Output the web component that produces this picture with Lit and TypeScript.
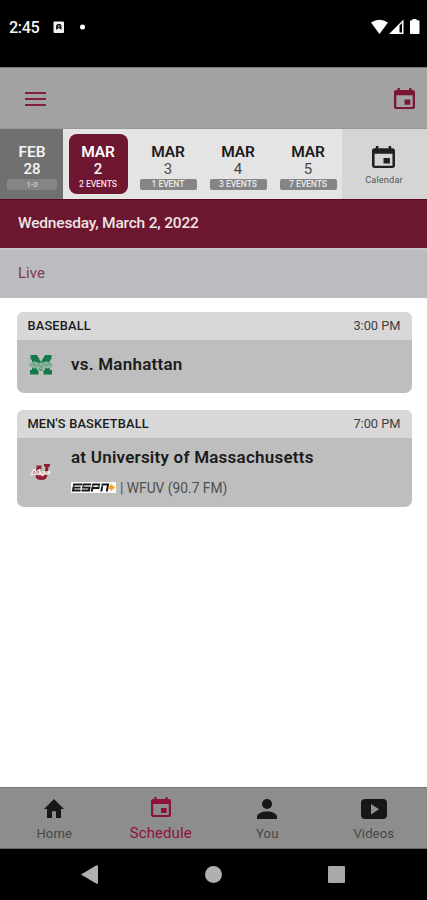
import { LitElement, html, css } from "lit";
import { customElement } from "lit/decorators.js";
import { classMap } from "lit/directives/class-map.js";

interface Day { month: string; day: string; note: string; kind: string }

const DAYS: Day[] = [
  { month: "FEB", day: "28", note: "1-0", kind: "past" },
  { month: "MAR", day: "2", note: "2 EVENTS", kind: "selected" },
  { month: "MAR", day: "3", note: "1 EVENT", kind: "" },
  { month: "MAR", day: "4", note: "3 EVENTS", kind: "" },
  { month: "MAR", day: "5", note: "7 EVENTS", kind: "" },
];

const calendarPath = "M17 12h-5v5h5v-5zM16 1v2H8V1H6v2H5c-1.11 0-1.99.9-1.99 2L3 19c0 1.1.89 2 2 2h14c1.1 0 2-.9 2-2V5c0-1.1-.9-2-2-2h-1V1h-2zm3 18H5V8h14v11z";

const calendar = (cls: string) => html`<svg class=${cls} viewBox="3 1 18 20" preserveAspectRatio="none"><path d=${calendarPath} fill="currentColor"/></svg>`;

const TABS = [
  { name: "Home", icon: html`<svg class="i-home" viewBox="2 3 20 17" preserveAspectRatio="none"><path fill="currentColor" d="M10 20v-6h4v6h5v-8h3L12 3 2 12h3v8z"/></svg>` },
  { name: "Schedule", icon: calendar("i-cal") },
  { name: "You", icon: html`<svg class="i-you" viewBox="0 0 20 20" preserveAspectRatio="none"><circle cx="10" cy="5" r="5" fill="currentColor"/><path fill="currentColor" d="M0 20v-2.200c0-3.300 5-5.300 10-5.300s10 2 10 5.300V20z"/></svg>` },
  { name: "Videos", icon: html`<svg class="i-vid" viewBox="0 0 26 20"><rect width="26" height="20" rx="4" fill="currentColor"/><path fill="#929292" d="M10 5v10.500l8-5.250z"/></svg>` },
];

@customElement("app-root")
export class AppRoot extends LitElement {
  static styles = css`
    :host { display: flex; flex-direction: column; width: 427px; height: 900px; background: #fff; overflow: hidden;
      font-family: Roboto, "Liberation Sans", sans-serif; color: #1b1b1b; }
    * { box-sizing: border-box; }
    svg { display: block; flex: none; }
    .status { height: 67px; background: #000; display: flex; align-items: flex-start; color: #f4f4f4; padding: 18px 7px 0 9px; flex: none; }
    .time { font-size: 16.2px; line-height: 20px; font-weight: 500; width: 44px; letter-spacing: -.4px; white-space: nowrap; }
    .left-icons { margin-top: 3px; }
    .right-icons { margin-left: auto; margin-top: 1px; }
    .header { height: 62px; background: #a2a2a2; border-top: 1px solid #7d7d7d; border-bottom: 1px solid #989898; display: flex; justify-content: space-between; align-items: center; padding: 0 12px 0 25px; color: #7b1735; flex: none; }
    .bars { width: 21px; height: 14px; display: flex; flex-direction: column; justify-content: space-between; margin-top: 1px; }
    .bars i { height: 2px; background: #7c2140; }
    .head-cal { width: 21px; height: 21px; }
    .strip { height: 70px; display: flex; background: #e4e4e4; flex: none; }
    .day { width: 70px; text-align: center; display: flex; flex-direction: column; align-items: center; padding-top: 14px; }
    .past { width: 63px; background: #707070; color: #f2f2f2; padding-left: 1px; }
    .month { font-size: 15.5px; line-height: 18px; font-weight: 600; letter-spacing: -.1px; }
    .num { font-size: 15px; line-height: 17px; color: #484848; }
    .past .num, .selected .num { color: #f4f4f4; font-weight: 500; }
    .note { margin-top: 1px; width: 57px; height: 11px; border-radius: 2px; background: #858585; color: #e9e9e9; font-size: 8.600px; line-height: 11px; letter-spacing: -.1px; font-weight: 500; white-space: nowrap; }
    .past .note { width: 50px; background: #858585; color: #ccc; font-size: 8px; }
    .selected { width: 59px; height: 60px; margin: 5px 5.500px 0; border-radius: 8px; background: #6f1731; color: #fff; padding-top: 9px; }
    .selected .note { background: none; color: #f3dfe4; }
    .cal-button { flex: 1; background: #d5d5d5; display: flex; flex-direction: column; align-items: center; padding: 17px 4px 0 3px; color: #202020; margin-left: -1px; }
    .b-cal { width: 23px; height: 22px; margin-right: 2px; }
    .cal-label { margin-top: 6px; font-size: 9.200px; line-height: 12px; color: #555; letter-spacing: .15px; }
    .date { height: 49px; background: #6d162f; border-top: 1px solid #5a0b18; color: #eee4e3; padding: 0 18px; font-size: 15.5px; line-height: 47px; font-weight: 500; letter-spacing: -.2px; flex: none; white-space: nowrap; }
    .live { height: 50px; background: #bbbcbf; border-top: 2px solid #c6c4c6; color: #803b50; padding: 0 18px; font-size: 15px; line-height: 47px; flex: none; }
    .cards { flex: 1; padding: 14px 15.500px 0 16.500px; display: flex; flex-direction: column; gap: 17px; }
    .card { border-radius: 7px; overflow: hidden; background: #bebebe; }
    .card-head { height: 28px; background: #d8d8d8; display: flex; justify-content: space-between; padding: 0 11px; font-size: 12.8px; line-height: 28px; }
    .sport { font-weight: 500; letter-spacing: .18px; }
    .when { color: #404040; }
    .card-body { height: 53px; display: flex; align-items: center; padding-left: 11px; }
    .tall .card-body { height: 69px; }
    .logo { width: 27px; margin: -3px 16.500px 0 0; }
    .tall .logo { margin-top: -1px; }
    .teams { font-size: 17px; line-height: 20px; font-weight: 600; letter-spacing: .23px; margin-top: -5px; white-space: nowrap; }
    .tall .teams { margin-top: -2px; }
    .media { display: flex; align-items: center; margin-top: 12px; font-size: 13.8px; line-height: 18px; color: #505050; gap: 4px; white-space: nowrap; }
    .tabs { height: 62px; background: #8d8d8d; border-top: 1px solid #777; border-bottom: 1px solid #666; display: flex; flex: none; padding-left: 1px; }
    .tab { flex: 1; display: flex; flex-direction: column; align-items: center; color: #171717; }
    .icon { height: 38px; padding-top: 11px; }
    .label { font-size: 13.1px; line-height: 15px; color: #474747; letter-spacing: .1px; }
    .active { color: #8d1238; }
    .active .icon { padding-top: 9px; height: 38px; }
    .active .label { font-size: 15px; color: #8d1238; }
    .i-home { width: 20px; height: 19px; }
    .i-cal { width: 20px; height: 20px; }
    .i-you { width: 20px; height: 20px; }
    .i-vid { width: 26px; height: 20px; }
    .nav { height: 51px; background: #000; display: flex; align-items: center; justify-content: space-between; padding: 0 82px 0 81px; flex: none; }
  `;

  render() {
    return html`
      <div class="status">
        <span class="time">2:45</span>
        <svg class="left-icons" width="34" height="13" viewBox="0 0 34 13">
          <rect x=".5" y=".5" width="10.500" height="11.500" rx="1" fill="#f2f2f2"/>
          <path d="M3 9V4.500L4.500 3h3L8.500 4.500V9L5.800 7z" fill="#222"/><circle cx="5.800" cy="5.300" r=".8" fill="#ddd"/>
          <circle cx="29.500" cy="6" r="2.500" fill="#fff"/>
        </svg>
        <svg class="right-icons" width="50" height="16" viewBox="370 19 50 16">
          <path fill="#fff" d="M371 22.500q8.300-5.500 17 0L379.500 34z"/>
          <path fill="#fff" fill-rule="evenodd" d="M389 34L403.500 19.500V34zM399.500 25.500V32.500H402V23z"/>
          <path fill="#fff" d="M410 21.200q0-1 1-1h1.500V19h4v1.200H418.500q1 0 1 1V33q0 1-1 1h-7.500q-1 0-1-1z"/>
        </svg>
      </div>
      <div class="header">
        <div class="bars"><i></i><i></i><i></i></div>
        ${calendar("head-cal")}
      </div>
      <div class="strip">
        ${DAYS.map((d) => html`<div class=${classMap({ day: true, past: d.kind === "past", selected: d.kind === "selected" })}>
          <span class="month">${d.month}</span><span class="num">${d.day}</span><span class="note">${d.note}</span>
        </div>`)}
        <div class="cal-button">${calendar("b-cal")}<span class="cal-label">Calendar</span></div>
      </div>
      <div class="date">Wednesday, March 2, 2022</div>
      <div class="live">Live</div>
      <div class="cards">
        <div class="card">
          <div class="card-head"><span class="sport">BASEBALL</span><span class="when">3:00 PM</span></div>
          <div class="card-body">
            <svg class="logo" height="22" viewBox="0 0 27 22">
              <path fill="#16794a" d="M2.500 1H9l4 7 4-7h6.500v4.500H22V16h2v4.500h-8.500V16H17v-5l-3 5.500h-2L9 11v5h1.500v4.500H2V16h2V5.500H2.500z"/>
              <path d="M1 12q-1-4 3-4l3-.5 4 1.500 3-.5 4-1 5 .5 1.500 3-1.500 3-4 .5-3-1-3 2.500-2-2-5 .5z" fill="#8eb5a0"/>
              <path d="M3 12l3-3 1 4 4-3 2 4 3-5 2 3 3-3 2 3" fill="none" stroke="#4d9771" stroke-width=".8"/>
            </svg>
            <div class="teams">vs. Manhattan</div>
          </div>
        </div>
        <div class="card tall">
          <div class="card-head"><span class="sport">MEN'S BASKETBALL</span><span class="when">7:00 PM</span></div>
          <div class="card-body">
            <svg class="logo" height="20" viewBox="-1 0 27 20">
              <path d="M7.500 3.500h5L12 13q0 1.500 1.500 1.500T15.500 12l1-7-1.500-.5V2h6v2.500l-1.500.5-1 8q-.5 5-6 5-6 0-6-4.500l1-7.500z" fill="#921e31"/>
              <path d="M1 13.500L4 7h2.500l.5 2.500L10 7h2l-.5 2.500 3-.5 2.500.5 2-.5 3 .5-1 2.500-3 1-2-.5-2.500 1-3-.5-1 .5-1.500-1L7 13.500l-1.500-1z" fill="#efe9e9"/>
              <path d="M4 12l1-3 1.500 3L9.500 9v3m3-1q1.500-1 2 .5m2-.5q1.500-1 2 .5" fill="none" stroke="#9b5660" stroke-width=".6"/>
            </svg>
            <div>
              <div class="teams">at University of Massachusetts</div>
              <div class="media">
                <svg width="45" height="11" viewBox="0 0 45 11">
                  <rect width="45" height="11" fill="#fafafa"/>
                  <g fill="none" stroke="#151515" stroke-width="2" transform="translate(1.500 0) skewX(-10)">
                    <path d="M10 2.500H2V8.500H9.500M2 5.500H9M19 2.500H11.500V5.500H18V8.500H10.500M21 9.500V2.500H27V6H21M30.500 9.500V2.500H36V9.500"/>
                  </g>
                  <path d="M0 4.100h36" stroke="#fafafa" stroke-width=".6"/>
                  <path d="M40.500 2.200l1.300 2 2.200 1.300-2.200 1.300-1.300 2-1.300-2L37 5.500l2.200-1.300z" fill="#f2a51c" stroke="#f2a51c" stroke-width=".6"/>
                </svg>
                <span>| WFUV (90.7 FM)</span>
              </div>
            </div>
          </div>
        </div>
      </div>
      <div class="tabs">
        ${TABS.map((t) => html`<div class=${classMap({ tab: true, active: t.name === "Schedule" })}><div class="icon">${t.icon}</div><span class="label">${t.name}</span></div>`)}
      </div>
      <div class="nav">
        <svg width="17" height="19" viewBox="0 0 17 19"><path d="M0 9.500L15.500.3Q17 0 17 1.500v16Q17 19 15.500 18.700z" fill="#b0b0b0"/></svg>
        <svg width="17" height="17" viewBox="0 0 17 17"><circle cx="8.500" cy="8.500" r="8.500" fill="#b0b0b0"/></svg>
        <svg width="17" height="17" viewBox="0 0 17 17"><rect width="17" height="17" rx="1" fill="#a8a8a8"/></svg>
      </div>
    `;
  }
}
